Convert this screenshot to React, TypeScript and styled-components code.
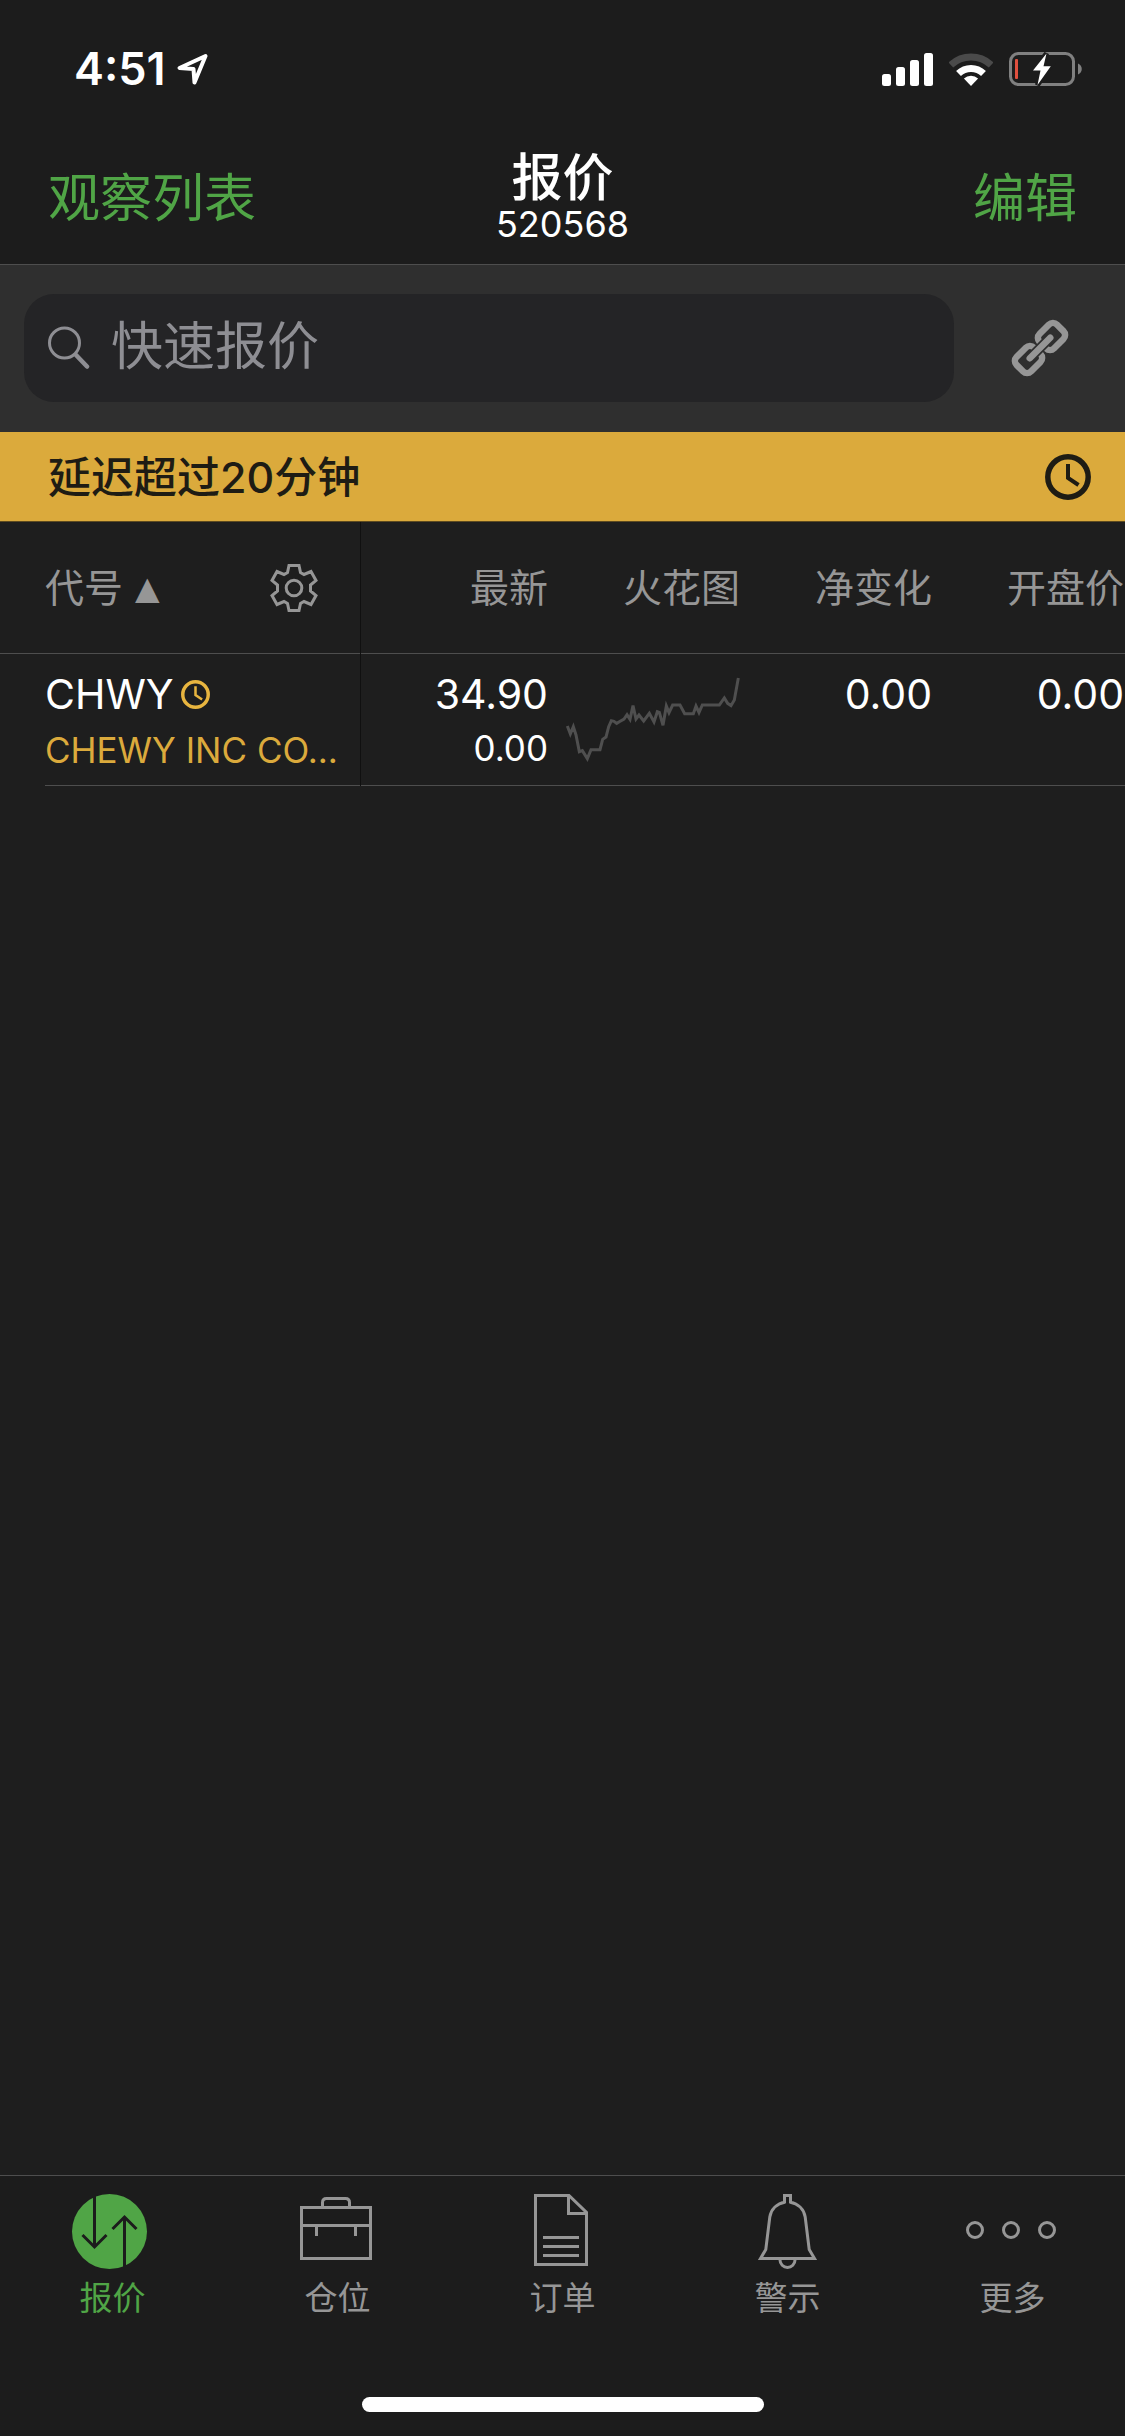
import React, { useState } from "react";
import styled, { createGlobalStyle } from "styled-components";

const color = {
  bar: "#1c1c1c",
  page: "#1e1e1e",
  panel: "#2f2f2f",
  field: "#242426",
  line: "#4e4e4e",
  green: "#50a546",
  yellow: "#dbaa3c",
  grey: "#969696",
  placeholder: "#8e8e93",
  white: "#ffffff",
};

const GlobalStyle = createGlobalStyle`
  *, *::before, *::after { box-sizing: border-box; }
  body {
    margin: 0;
    background: ${color.page};
    color: ${color.white};
    font-family: Inter, "Noto Sans CJK SC", sans-serif;
  }
  button, input { font-family: inherit; }
  svg { display: block; flex: none; }
`;

const Screen = styled.div`
  display: flex;
  flex-direction: column;
  min-height: 100vh;
`;

const PlainButton = styled.button`
  display: flex;
  align-items: center;
  margin: 0;
  padding: 0;
  border: 0;
  background: none;
  color: inherit;
  cursor: pointer;
`;

const StatusBar = styled.div`
  display: flex;
  align-items: center;
  justify-content: space-between;
  height: 132px;
  padding: 6px 42px 0 74px;
  background: ${color.bar};
`;

const StatusGroup = styled.div<{ $gap: number }>`
  display: flex;
  align-items: center;
  gap: ${(p) => p.$gap}px;
`;

const Clock = styled.span`
  font-size: 45px;
  font-weight: 600;
  line-height: 56px;
`;

const NavBar = styled.header`
  display: grid;
  grid-template-columns: 1fr auto 1fr;
  align-items: center;
  height: 133px;
  padding: 0 48px;
  border-bottom: 1px solid ${color.line};
  background: ${color.bar};
`;

const NavAction = styled(PlainButton)<{ $end?: boolean }>`
  justify-self: ${(p) => (p.$end ? "end" : "start")};
  padding-top: 2px;
  color: ${color.green};
  font-size: 52px;
  line-height: 56px;
`;

const NavTitle = styled.div`
  padding-bottom: 4px;
  text-align: center;
`;

const Title = styled.h1`
  margin: 0;
  font-size: 51px;
  font-weight: 500;
  line-height: 56px;
`;

const Account = styled.div`
  font-size: 36px;
  line-height: 36px;
`;

const SearchPanel = styled.div`
  display: flex;
  padding: 29px 0 30px 24px;
  background: ${color.panel};
`;

const SearchField = styled.label`
  display: flex;
  flex: 1;
  align-items: center;
  gap: 21px;
  min-width: 0;
  height: 108px;
  padding: 0 24px;
  border-radius: 30px;
  background: ${color.field};
`;

const SearchInput = styled.input`
  flex: 1;
  min-width: 0;
  height: 64px;
  padding: 0 0 3px;
  border: 0;
  outline: 0;
  background: none;
  color: ${color.white};
  font-size: 52px;

  &::placeholder {
    color: ${color.placeholder};
    opacity: 1;
  }
`;

const LinkButton = styled(PlainButton)`
  justify-content: center;
  width: 171px;
`;

const DelayNotice = styled.div`
  display: flex;
  align-items: center;
  justify-content: space-between;
  height: 90px;
  padding: 0 34px 0 48px;
  border-bottom: 1px solid #5e4b20;
  background: ${color.yellow};
  color: #1e1c14;
  font-size: 43px;
  font-weight: 500;
  line-height: 56px;
`;

const TableScroller = styled.main`
  flex: 1;
  overflow-x: auto;
  background: ${color.page};
  scrollbar-width: none;
`;

const QuoteTable = styled.table`
  width: 1129px;
  border-spacing: 0;
  table-layout: fixed;

  th, td {
    padding: 0;
    font-weight: 400;
    vertical-align: top;
  }

  th:first-child, td:first-child {
    width: 361px;
    border-right: 1px solid #101010;
  }

  td:first-child { padding-left: 45px; }
`;

const HeadCell = styled.div`
  display: flex;
  align-items: center;
  justify-content: flex-end;
  height: 132px;
  padding-right: 5px;
  border-bottom: 1px solid ${color.line};
  color: ${color.grey};
  font-size: 39px;
  line-height: 52px;
`;

const SymbolHeadCell = styled(HeadCell)`
  justify-content: space-between;
  padding: 0 42px 0 45px;
`;

const SortButton = styled(PlainButton)`
  gap: 12px;
  font-size: 39px;
  line-height: 52px;
`;

const SortMark = styled.span`
  font-family: "DejaVu Sans", sans-serif;
  font-size: 32px;
`;

const BodyCell = styled.div<{ $end?: boolean }>`
  height: 132px;
  padding: ${(p) => (p.$end ? "12px 5px 0 0" : "12px 0 0")};
  border-bottom: 1px solid ${color.line};
  text-align: ${(p) => (p.$end ? "right" : "left")};
`;

const ChartCell = styled.div`
  height: 132px;
  border-bottom: 1px solid ${color.line};
`;

const Primary = styled.div`
  display: flex;
  align-items: center;
  gap: 7px;
  font-size: 41px;
  line-height: 56px;
`;

const Value = styled.div<{ $small?: boolean }>`
  font-size: ${(p) => (p.$small ? 35 : 41)}px;
  line-height: ${(p) => (p.$small ? 52 : 56)}px;
`;

const Company = styled.div`
  overflow: hidden;
  color: ${color.yellow};
  font-size: 35px;
  line-height: 56px;
  white-space: nowrap;
`;

const Footer = styled.footer`
  display: flex;
  flex-direction: column;
  align-items: center;
  justify-content: space-between;
  height: 261px;
  padding-bottom: 24px;
  border-top: 1px solid ${color.line};
  background: ${color.bar};
`;

const Tabs = styled.nav`
  display: grid;
  grid-template-columns: repeat(5, 1fr);
  width: 100%;
  padding-top: 18px;
`;

const Tab = styled(PlainButton)<{ $active: boolean }>`
  flex-direction: column;
  gap: 9px;
  color: ${(p) => (p.$active ? color.green : color.grey)};
  font-size: 33px;
  font-weight: 400;
  line-height: 40px;
`;

const HomeIndicator = styled.div`
  width: 402px;
  height: 15px;
  border-radius: 8px;
  background: ${color.white};
`;

const LocationIcon = () => (
  <svg width="32" height="32" viewBox="0 0 32 32" fill="none" stroke="#fff" strokeWidth="4" strokeLinejoin="round">
    <path d="M2.5 15 28.5 3 17.5 29.5 16.5 16Z" />
  </svg>
);

const SignalIcon = () => (
  <svg width="51" height="33" viewBox="0 0 51 33" fill="#fff">
    <rect x="0" y="21" width="9" height="12" rx="2.5" />
    <rect x="14" y="14" width="9" height="19" rx="2.5" />
    <rect x="28" y="7" width="9" height="26" rx="2.5" />
    <rect x="42" y="0" width="9" height="33" rx="2.5" />
  </svg>
);

const WifiIcon = () => (
  <svg width="44" height="33" viewBox="0 0 44 33" fill="none" strokeWidth="7">
    <path d="M1.8 12A29.5 29.5 0 0 1 42.2 12" stroke="#4a4a4a" />
    <path d="M9.5 20.5A18 18 0 0 1 34.5 20.5" stroke="#fff" />
    <path d="M22 33 14.9 25.5A10.5 10.5 0 0 1 29.1 25.5Z" fill="#fff" />
  </svg>
);

const BatteryIcon = () => (
  <svg width="74" height="34" viewBox="0 0 74 34">
    <rect x="1.5" y="1.5" width="63" height="31" rx="8" fill="none" stroke="#808080" strokeWidth="3" />
    <path d="M69 11.5C74 13.5 74 20.5 69 22.5Z" fill="#808080" />
    <rect x="6" y="7" width="3" height="20" rx="1" fill="#e0503f" />
    <path
      d="M37.5 1.5 24 18.5H31.5L28.5 33 41.8 14.3H34.5Z"
      fill="#fff"
      stroke={color.bar}
      strokeWidth="5"
      paintOrder="stroke"
    />
  </svg>
);

const SearchIcon = () => (
  <svg width="42" height="44" viewBox="0 0 42 44" fill="none" stroke={color.placeholder} strokeLinecap="round">
    <circle cx="16.5" cy="17" r="15" strokeWidth="3" />
    <path d="M28 29 39 40.5" strokeWidth="4.5" />
  </svg>
);

const LinkIcon = () => (
  <svg width="60" height="60" viewBox="-30 -30 60 60" fill="none" strokeWidth="6.5">
    <g transform="rotate(-45)">
      <rect x="4" y="-10.2" width="24.500" height="20.400" rx="5.500" stroke={color.grey} />
      <rect x="-28.500" y="-10.200" width="24.500" height="20.400" rx="5.500" stroke={color.grey} />
      <path d="M-13 0H13" stroke={color.panel} strokeWidth="10" />
      <path d="M-14.500 0H14.500" stroke={color.grey} strokeLinecap="round" />
    </g>
  </svg>
);

const ClockIcon = ({ size, stroke }: { size: number; stroke: string }) => (
  <svg width={size} height={size} viewBox="-23 -23 46 46" fill="none" stroke={stroke}>
    <circle r="20.2" strokeWidth="5.5" />
    <path d="M0-13V1L10.5 8" strokeWidth="4" />
  </svg>
);

const GearIcon = () => (
  <svg width="48" height="48" viewBox="-24 -24 48 48" fill="none" stroke={color.grey} strokeWidth="3">
    <path d="M-5-22.5H5L6.5-15.5 10-13.5 17-16.5 22-7.5 16.5-3V3L22 7.5 17 16.5 10 13.5 6.5 15.5 5 22.5H-5L-6.5 15.5-10 13.5-17 16.5-22 7.5-16.5 3V-3L-22-7.5-17-16.5-10-13.5-6.5-15.5Z" />
    <circle r="7.8" />
  </svg>
);

const sparkPoints =
  "52,198 61,222 70,200 78,225 88,275 97,272 112,296 123,269 150,269 158,238 168,231 176,200 184,182 192,184 200,190 208,185 222,177 231,164 240,178 249,137 258,177 267,165 281,183 298,160 312,186 322,155 328,157 339,196 349,138 357,158 368,135 390,135 404,161 430,161 438,138 447,158 457,135 508,135 523,114 533,130 543,137 553,120 565,54";

const Sparkline = () => (
  <svg width="192" height="131" viewBox="9 -18 576 393" fill="none" stroke="#4f4f4f" strokeWidth="9">
    <polyline points={sparkPoints} />
  </svg>
);

const TabSvg = ({ children }: { children: React.ReactNode }) => (
  <svg width="93" height="75" viewBox="0 0 93 75" fill="none" stroke="currentColor" strokeWidth="3">
    {children}
  </svg>
);

const tabs = [
  {
    label: "报价",
    icon: (
      <>
        <circle cx="43.5" cy="37.5" r="37.5" fill="currentColor" stroke="none" />
        <path d="M28.5 0V53M16.5 41 28.5 53 40.5 41M58.5 75V23M46.5 35 58.5 23 70.5 35" stroke={color.bar} />
      </>
    ),
  },
  {
    label: "仓位",
    icon: <path d="M10.5 13.5H79.5V64.5H10.5ZM10.5 31.5H79.5M25.5 31.5V42M64.5 31.5V42M31.5 13.5V8.5Q31.5 4.5 35.5 4.5H54.5Q58.5 4.5 58.5 8.5V13.5" />,
  },
  {
    label: "订单",
    icon: <path d="M19.5 1.5H53L70.5 18.5V70.5H19.5ZM52.5 1.5V19.5H70.5M27 43.5H63M27 52.5H63M27 61.5H63" />,
  },
  {
    label: "警示",
    icon: (
      <>
        <path d="M43.5 9V1.5H49.5V9M44.5 8C35.5 9.5 30 15.5 28.8 23L24.8 55.5 19.5 64.5H73.5L68.2 55.5 64.2 23C63 15.5 57.5 9.5 48.5 8" />
        <path d="M39 66A7.5 7.5 0 0 0 54 66" />
      </>
    ),
  },
  {
    label: "更多",
    icon: (
      <>
        <circle cx="9" cy="36" r="7.5" />
        <circle cx="45" cy="36" r="7.5" />
        <circle cx="81" cy="36" r="7.5" />
      </>
    ),
  },
];

const columns = ["最新", "火花图", "净变化", "开盘价"];

export default function App() {
  const [active, setActive] = useState("报价");

  return (
    <Screen>
      <GlobalStyle />
      <StatusBar>
        <StatusGroup $gap={11}>
          <Clock>4:51</Clock>
          <LocationIcon />
        </StatusGroup>
        <StatusGroup $gap={16}>
          <SignalIcon />
          <WifiIcon />
          <BatteryIcon />
        </StatusGroup>
      </StatusBar>

      <NavBar>
        <NavAction type="button">观察列表</NavAction>
        <NavTitle>
          <Title>报价</Title>
          <Account>520568</Account>
        </NavTitle>
        <NavAction type="button" $end>
          编辑
        </NavAction>
      </NavBar>

      <SearchPanel>
        <SearchField>
          <SearchIcon />
          <SearchInput type="text" placeholder="快速报价" />
        </SearchField>
        <LinkButton type="button">
          <LinkIcon />
        </LinkButton>
      </SearchPanel>

      <DelayNotice>
        <span>延迟超过20分钟</span>
        <ClockIcon size={46} stroke="#1e1c14" />
      </DelayNotice>

      <TableScroller>
        <QuoteTable>
          <thead>
            <tr>
              <th scope="col">
                <SymbolHeadCell>
                  <SortButton type="button">
                    代号 <SortMark>▲</SortMark>
                  </SortButton>
                  <PlainButton type="button">
                    <GearIcon />
                  </PlainButton>
                </SymbolHeadCell>
              </th>
              {columns.map((name) => (
                <th scope="col" key={name}>
                  <HeadCell>{name}</HeadCell>
                </th>
              ))}
            </tr>
          </thead>
          <tbody>
            <tr>
              <td>
                <BodyCell>
                  <Primary>
                    CHWY <ClockIcon size={29} stroke="#e8b53f" />
                  </Primary>
                  <Company>CHEWY INC CO...</Company>
                </BodyCell>
              </td>
              <td>
                <BodyCell $end>
                  <Value>34.90</Value>
                  <Value $small>0.00</Value>
                </BodyCell>
              </td>
              <td>
                <ChartCell>
                  <Sparkline />
                </ChartCell>
              </td>
              <td>
                <BodyCell $end>
                  <Value>0.00</Value>
                </BodyCell>
              </td>
              <td>
                <BodyCell $end>
                  <Value>0.00</Value>
                </BodyCell>
              </td>
            </tr>
          </tbody>
        </QuoteTable>
      </TableScroller>

      <Footer>
        <Tabs>
          {tabs.map((tab) => (
            <Tab key={tab.label} type="button" $active={tab.label === active} onClick={() => setActive(tab.label)}>
              <TabSvg>{tab.icon}</TabSvg>
              {tab.label}
            </Tab>
          ))}
        </Tabs>
        <HomeIndicator />
      </Footer>
    </Screen>
  );
}
